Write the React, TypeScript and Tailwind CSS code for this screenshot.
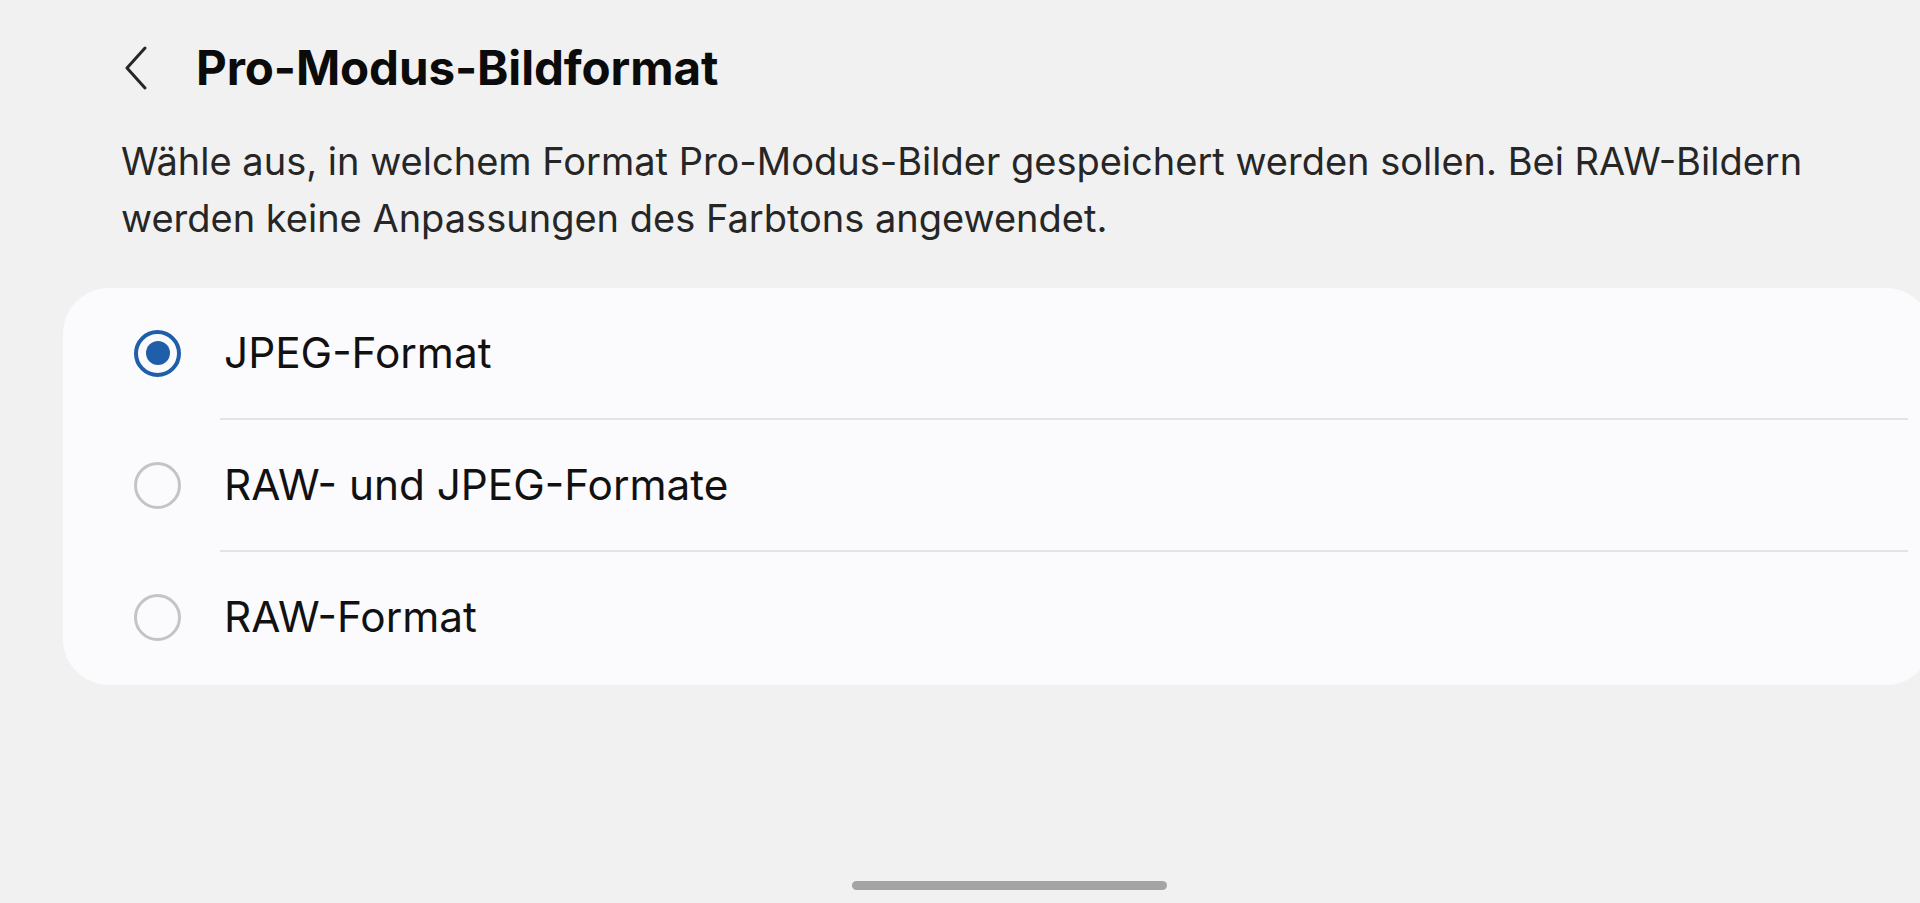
import { useState } from "react";

const options = ["JPEG-Format", "RAW- und JPEG-Formate", "RAW-Format"];

function Radio({ checked }: { checked: boolean }) {
  if (checked) {
    return (
      <span className="flex h-[47px] w-[47px] shrink-0 items-center justify-center rounded-full border-[4px] border-[#1f5fa9]">
        <span className="h-[24px] w-[24px] rounded-full bg-[#1f5fa9]" />
      </span>
    );
  }
  return <span className="h-[47px] w-[47px] shrink-0 rounded-full border-[3px] border-[#c4c4c4]" />;
}

export default function App() {
  const [selected, setSelected] = useState(0);

  return (
    <div className="flex h-[903px] w-full flex-col overflow-hidden bg-[#f1f1f1] font-['Inter','Roboto',sans-serif] text-[#111]">
      <header className="mt-[28px] flex h-[80px] items-center">
        <button className="ml-[123px] flex h-[48px] w-[26px] items-center justify-center">
          <svg width="24" height="44" viewBox="0 0 24 44" fill="none">
            <path d="M21 2 L3 22 L21 42" stroke="#262626" strokeWidth="3" strokeLinecap="round" strokeLinejoin="round" />
          </svg>
        </button>
        <h1 className="ml-[47px] text-[47.5px] font-bold leading-none tracking-[-0.1px] text-[#0b0b0b]">
          Pro-Modus-Bildformat
        </h1>
      </header>

      <p className="ml-[121px] mt-[25px] text-[38px] leading-[57px] text-[#262626]">
        Wähle aus, in welchem Format Pro-Modus-Bilder gespeichert werden sollen. Bei RAW-Bildern
        <br />
        werden keine Anpassungen des Farbtons angewendet.
      </p>

      <div className="ml-[63px] mt-[41px] w-[1869px] shrink-0 rounded-[46px] bg-[#fbfbfd] pb-[3px]">
        {options.map((label, i) => (
          <div key={label}>
            {i > 0 && <div className="ml-[157px] mr-[24px] h-[2px] bg-[#e3e3e6]" />}
            <button
              onClick={() => setSelected(i)}
              className="flex h-[130px] w-full items-center pl-[71px] text-left"
            >
              <Radio checked={selected === i} />
              <span className="ml-[43px] text-[42.3px] leading-none text-[#111]">{label}</span>
            </button>
          </div>
        ))}
      </div>

      <div className="mb-[13px] ml-[852px] mt-auto h-[9px] w-[315px] rounded-full bg-[#a4a4a4]" />
    </div>
  );
}
